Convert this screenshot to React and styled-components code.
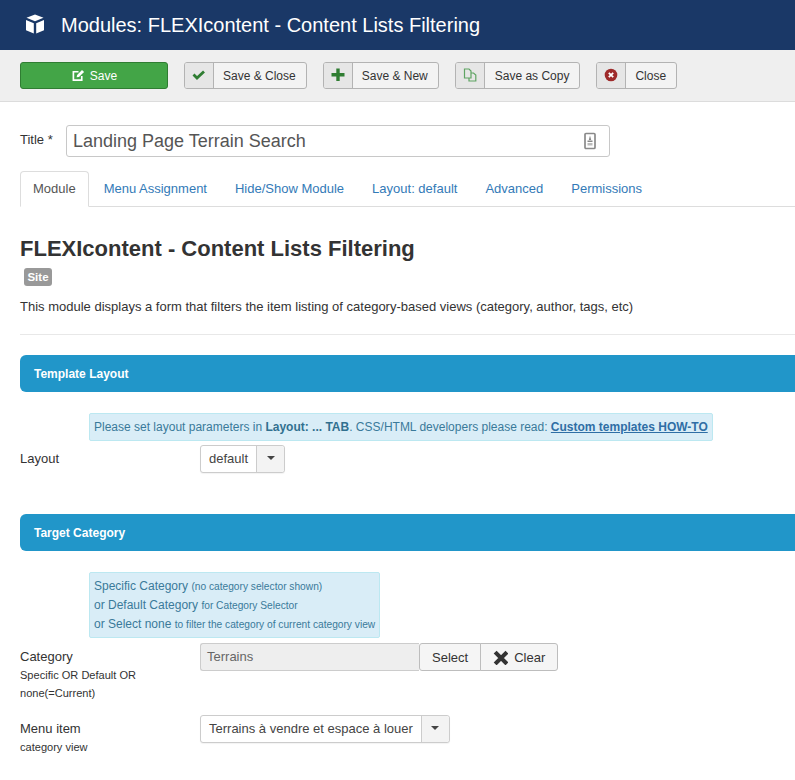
import React from "react";
import styled, { createGlobalStyle } from "styled-components";

const Global = createGlobalStyle`
  html, body { margin: 0; padding: 0; background: #fff; }
  body { font-family: "Liberation Sans", Arial, sans-serif; font-size: 13px; line-height: 18px; color: #333; overflow: hidden; }
  * { box-sizing: border-box; }
`;

const Header = styled.header`
  height: 50px; background: #1a3867; display: flex; align-items: center; padding-left: 25px; gap: 16px;
  color: #fff; font-size: 20px;
`;
const Logo = styled.span`
  display: flex; margin-bottom: 3px;
`;
const Toolbar = styled.div`
  height: 52px; background: #efefef; border-bottom: 1px solid #dcdcdc; display: flex; align-items: flex-start;
  padding: 12px 0 0 20px; gap: 16px;
`;
const SaveButton = styled.button`
  width: 148px; height: 27px; padding: 0 0 0 1px; background: #43a547; border: 1px solid #2f7d32; border-radius: 3px;
  color: #fff; font: 12px "Liberation Sans", sans-serif; display: flex; align-items: center; justify-content: center; gap: 5px;
`;
const ToolButton = styled.button`
  height: 27px; padding: 0; background: #f3f3f3; border: 1px solid #b3b3b3; border-radius: 3px; display: flex; align-items: stretch;
  color: #333; font: 12px "Liberation Sans", sans-serif; overflow: hidden;
`;
const ToolIcon = styled.span`
  width: 29px; background: #e6e6e6; border-right: 1px solid #b3b3b3; display: flex; align-items: flex-start; justify-content: center; padding-top: 5px;
`;
const ToolText = styled.span`
  padding: 0 10px 0 ${p => p.$left || 9}px; display: flex; align-items: center;
`;
const Main = styled.main`
  padding: 23px 0 0 20px;
`;
const TitleRow = styled.div`
  display: flex; align-items: flex-start; gap: 13px;
`;
const TitleLabel = styled.label`
  font-size: 13px; line-height: 18px; padding-top: 6px; width: 33px; white-space: nowrap;
`;
const TitleField = styled.div`
  width: 544px; height: 32px; border: 1px solid #c8c8c8; border-radius: 3px; display: flex; align-items: center; justify-content: space-between;
  padding: 0 13px 0 6px; font-size: 18px; color: #555;
`;
const Tabs = styled.nav`
  margin-top: 14px; height: 36px; border-bottom: 1px solid #ddd; display: flex; align-items: flex-start;
`;
const Tab = styled.a`
  height: 36px; padding: 0 14px; display: flex; align-items: center; font-size: 13px; color: ${p => (p.$active ? "#555" : "#337ab7")};
  ${p => p.$active ? "background:#fff;border:1px solid #ddd;border-bottom-color:#fff;border-radius:4px 4px 0 0;padding:0 12px;margin-right:1px;" : ""}
`;
const Heading = styled.h2`
  margin: 28px 0 0; font-size: 22px; line-height: 28px; font-weight: 700; color: #333;
`;
const Badge = styled.span`
  display: block; width: 28px; height: 18px; margin: 5px 0 0 4px; background: #999; color: #fff; border-radius: 3px;
  font-size: 11.5px; font-weight: 700; line-height: 18px; text-align: center;
`;
const Description = styled.p`
  margin: 12px 0 0; font-size: 13px; line-height: 18px; color: #333;
`;
const Rule = styled.hr`
  margin: 18px 0 20px; border: 0; border-top: 1px solid #e8e8e8;
`;
const SectionBar = styled.div`
  height: 37px; background: #2196c9; border-radius: 6px 0 0 6px; color: #fff; font-size: 12px; font-weight: 700; display: flex; align-items: center; padding-left: 14px;
`;
const Notice = styled.div`
  margin: 21px 0 ${p => p.$bottom}px 69px; width: fit-content; padding: 4px 4px 3px 4px; background: #d9edf7; border: 1px solid #bce8f1; border-radius: 2px;
  color: #3a7a9a; font-size: 12px; line-height: 19px; white-space: nowrap;
  strong { color: #31708f; }
  small { font-size: 10.2px; }
  a { color: #2f6ea5; font-weight: 700; text-decoration: underline; }
`;
const FieldRow = styled.div`
  display: flex; align-items: flex-start; margin-bottom: ${p => p.$mb}px;
`;
const FieldLabel = styled.div`
  width: 180px; font-size: 13px; line-height: 18px; color: #333; padding-top: 5px;
  small { display: block; font-size: 11.05px; line-height: 18px; width: 130px; }
`;
const Select = styled.div`
  height: 28px; border: 1px solid #ccc; border-radius: 3px; display: flex; background: #fff; font-size: 13px; color: #444; box-shadow: 0 1px 1px rgba(0,0,0,.05);
`;
const SelectValue = styled.span`
  padding: 0 8px; display: flex; align-items: center;
`;
const SelectArrow = styled.span`
  width: 28px; background: #f3f3f3; border-left: 1px solid #ccc; display: flex; align-items: flex-start; justify-content: center; padding-top: 10px;
  border-radius: 0 3px 3px 0;
  &::after { content: ""; border: 4px solid transparent; border-top-color: #444; border-bottom: 0; }
`;
const InputGroup = styled.div`
  display: flex; height: 28px; font-size: 13px;
`;
const ReadOnly = styled.div`
  width: 219px; background: #eee; border: 1px solid #ccc; border-right: 0; border-radius: 3px 0 0 3px; color: #666; padding-left: 6px; display: flex; align-items: center;
`;
const GroupButton = styled.button`
  height: 28px; background: #f5f5f5; border: 1px solid #bdbdbd; color: #333; font: 13px "Liberation Sans", sans-serif; padding: 0 ${p => p.$pad}px; display: flex; align-items: center; gap: 6px;
  border-radius: ${p => (p.$last ? "0 3px 3px 0" : "3px 0 0 3px")}; margin-left: ${p => (p.$last ? "-1px" : "0")};
`;

const Svg = ({ w = 14, h = 14, children, vb = "0 0 14 14" }) => (
  <svg width={w} height={h} viewBox={vb} aria-hidden="true">{children}</svg>
);

export default function App() {
  return (
    <>
      <Global />
      <Header>
        <Logo>
          <Svg w={20} h={20} vb="0 0 20 20">
            <path d="M10 0.5 L18.5 3.8 L10 7.2 L1.5 3.8 Z" fill="#fff" />
            <path d="M1 6 L8.8 9.2 V19.5 L1 16.3 Z M19 6 L11.2 9.2 V19.5 L19 16.3 Z" fill="#fff" />
          </Svg>
        </Logo>
        <span>Modules: FLEXIcontent - Content Lists Filtering</span>
      </Header>
      <Toolbar>
        <SaveButton>
          <Svg w={13} h={13}>
            <path d="M10.5 7.5 V12 H1.5 V3 H7" fill="none" stroke="#fff" strokeWidth="1.8" />
            <path d="M5.5 6.5 L10.8 1 L13 3.2 L7.5 8.5 L5 9 Z" fill="#fff" />
          </Svg>
          Save
        </SaveButton>
        <ToolButton>
          <ToolIcon><Svg><path d="M1.5 6.5 L5 10 L12 3.5" fill="none" stroke="#2f7d32" strokeWidth="2.8" /></Svg></ToolIcon>
          <ToolText>Save &amp; Close</ToolText>
        </ToolButton>
        <ToolButton>
          <ToolIcon><Svg><path d="M7 0.5 V13 M0.5 6.8 H13.5" stroke="#2f7d32" strokeWidth="3.4" /></Svg></ToolIcon>
          <ToolText>Save &amp; New</ToolText>
        </ToolButton>
        <ToolButton>
          <ToolIcon>
            <Svg>
              <path d="M1.5 1 H6 L8 3 V10 H1.5 Z M8 5 H10.5 L12.8 7 V13 H6 V10" fill="none" stroke="#5fa463" strokeWidth="1.2" />
            </Svg>
          </ToolIcon>
          <ToolText $left={10}>Save as Copy</ToolText>
        </ToolButton>
        <ToolButton>
          <ToolIcon>
            <Svg>
              <circle cx="7" cy="7" r="6.3" fill="#9e2a2a" />
              <path d="M4.8 4.8 L9.2 9.2 M9.2 4.8 L4.8 9.2" stroke="#fff" strokeWidth="1.8" />
            </Svg>
          </ToolIcon>
          <ToolText>Close</ToolText>
        </ToolButton>
      </Toolbar>
      <Main>
        <TitleRow>
          <TitleLabel>Title *</TitleLabel>
          <TitleField>
            <span>Landing Page Terrain Search</span>
            <Svg w={12} h={18} vb="0 0 12 18">
              <rect x="1" y="1.5" width="10" height="15" rx="1" fill="#fff" stroke="#8a8a8a" strokeWidth="1.7" />
              <path d="M6 3.5 L7.2 8 H4.8 Z" fill="#888" />
              <rect x="3.5" y="8.5" width="5" height="1.5" fill="#888" />
              <rect x="3.5" y="11" width="5" height="2.5" fill="#bbb" />
            </Svg>
          </TitleField>
        </TitleRow>
        <Tabs>
          <Tab $active>Module</Tab>
          <Tab>Menu Assignment</Tab>
          <Tab>Hide/Show Module</Tab>
          <Tab>Layout: default</Tab>
          <Tab>Advanced</Tab>
          <Tab>Permissions</Tab>
        </Tabs>
        <Heading>FLEXIcontent - Content Lists Filtering</Heading>
        <Badge>Site</Badge>
        <Description>This module displays a form that filters the item listing of category-based views (category, author, tags, etc)</Description>
        <Rule />
        <SectionBar>Template Layout</SectionBar>
        <Notice $bottom={4}>
          Please set layout parameters in <strong>Layout: ... TAB</strong>. CSS/HTML developers please read: <a>Custom templates HOW-TO</a>
        </Notice>
        <FieldRow $mb={41}>
          <FieldLabel>Layout</FieldLabel>
          <Select>
            <SelectValue>default</SelectValue>
            <SelectArrow />
          </Select>
        </FieldRow>
        <SectionBar>Target Category</SectionBar>
        <Notice $bottom={5}>
          Specific Category <small>(no category selector shown)</small><br />
          or Default Category <small>for Category Selector</small><br />
          or Select none <small>to filter the category of current category view</small>
        </Notice>
        <FieldRow $mb={13}>
          <FieldLabel>
            Category
            <small>Specific OR Default OR none(=Current)</small>
          </FieldLabel>
          <InputGroup>
            <ReadOnly>Terrains</ReadOnly>
            <GroupButton $pad={12}>Select</GroupButton>
            <GroupButton $pad={12} $last>
              <Svg w={15} h={15}><path d="M2 2 L13 13 M13 2 L2 13" stroke="#333" strokeWidth="3.8" /></Svg>
              Clear
            </GroupButton>
          </InputGroup>
        </FieldRow>
        <FieldRow $mb={0}>
          <FieldLabel>
            Menu item
            <small>category view</small>
          </FieldLabel>
          <Select>
            <SelectValue>Terrains à vendre et espace à louer</SelectValue>
            <SelectArrow />
          </Select>
        </FieldRow>
      </Main>
    </>
  );
}
